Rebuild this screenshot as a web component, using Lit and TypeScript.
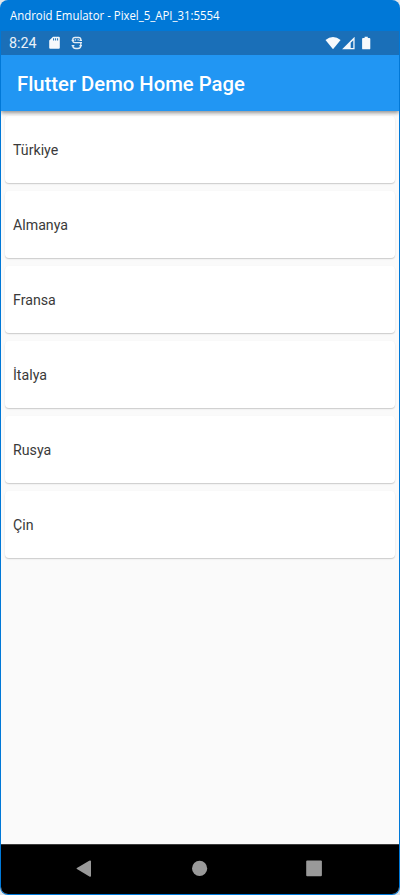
import { LitElement, html, css } from "lit";
import { customElement, property } from "lit/decorators.js";

@customElement("country-card")
class CountryCard extends LitElement {
  @property() name = "";
  static styles = css`
    :host {
      display: flex;
      align-items: center;
      box-sizing: border-box;
      height: 67px;
      padding: 0 8px;
      border-radius: 4px;
      background: #fff;
      box-shadow: 0 1px 1px rgba(0, 0, 0, 0.13), 0 1px 2px rgba(0, 0, 0, 0.08);
      color: #3a3a3a;
      font-size: 14.2px;
      line-height: 18px;
    }
  `;
  render() {
    return html`<span>${this.name}</span>`;
  }
}

@customElement("status-bar")
class StatusBar extends LitElement {
  static styles = css`
    :host {
      display: flex;
      align-items: center;
      position: relative;
      z-index: 2;
      height: 24px;
      flex: none;
      background: #1a6fb8;
      color: #e9f1f8;
      font-size: 14.3px;
    }
    .time {
      width: 41px;
      padding-left: 8px;
      box-sizing: border-box;
      margin-right: 7px;
      white-space: nowrap;
    }
    svg {
      display: block;
      fill: #f6f9fc;
    }
    .debug {
      margin-left: 10px;
    }
    .right {
      display: flex;
      align-items: center;
      margin-left: auto;
      margin-right: 28px;
    }
    .cell {
      margin-left: 1px;
    }
    .battery {
      margin-left: 7px;
    }
  `;
  render() {
    return html`
      <span class="time">8:24</span>
      <svg width="11" height="14" viewBox="0 0 11 14">
        <path fill-rule="evenodd" d="M4 .7h5.8q1 0 1 1v10.1q0 1-1 1H1.2q-1 0-1-1V4.5zM4.1 2.3v2.1h1V2.3zM6.1 2.3v2.1h1V2.3zM8.1 2.3v2.1h1V2.3z" />
      </svg>
      <svg class="debug" width="13" height="14" viewBox="0 0 13 14">
        <g fill="none" stroke="#e4edf5" stroke-width="1.3">
          <path d="M10.8 4.8V3.6Q10.8 1.5 8.6 1.5H5Q2.8 1.5 2.8 3.6V4.8Q2.8 6.6 4.8 6.6H10.8V9.4Q10.8 12.5 7.8 12.5H5.8Q2.8 12.5 2.8 9.8M1.6 4.3H4.2M9.4 4.3H12M10.4 6.6H12M1.6 9.6H4.4M9.4 9.6H12" />
          <path d="M4.8 3.9h1.3M7.5 3.9h1.3" stroke-width="1.1" />
        </g>
      </svg>
      <div class="right">
        <svg width="16" height="14" viewBox="0 0 16 14">
          <path d="M.5 3.9Q4 1 8 1t7.6 2.9L8 13.2z" />
        </svg>
        <svg class="cell" width="13" height="14" viewBox="0 0 13 14">
          <path fill-rule="evenodd" d="M12.6.7v12.5H.1zM11.3 4.2 8.7 6.8V12h2.6z" />
        </svg>
        <svg class="battery" width="9" height="14" viewBox="0 0 9 14">
          <path d="M2.6.7h3.2V2h1.6q.9 0 .9.9v9.5q0 .9-.9.9H1q-.9 0-.9-.9V2.9Q.1 2 1 2h1.6z" />
        </svg>
      </div>
    `;
  }
}

@customElement("navigation-bar")
class NavigationBar extends LitElement {
  static styles = css`
    :host {
      display: grid;
      grid-template-columns: 1fr 115px 1fr;
      align-items: center;
      justify-items: center;
      height: 50px;
      box-sizing: border-box;
      padding-bottom: 1px;
      flex: none;
      border-top: 1px solid #3c3c3c;
      background: #000;
    }
    svg {
      display: block;
      fill: #999;
    }
    .back {
      justify-self: end;
      margin-right: 51px;
    }
    .recent {
      justify-self: start;
      margin-left: 48px;
    }
  `;
  render() {
    return html`
      <svg class="back" width="16" height="18" viewBox="0 0 16 18">
        <path d="M.9 8.1 13.2.7Q15 .1 15 1.5v14.2q0 1.4-1.6.7L.9 9.1q-.8-.5 0-1z" />
      </svg>
      <svg width="16" height="18" viewBox="0 0 16 18">
        <circle cx="7.6" cy="8.4" r="7.6" />
      </svg>
      <svg class="recent" width="17" height="18" viewBox="0 0 17 18">
        <rect x=".2" y=".5" width="15.7" height="15.8" rx="1" />
      </svg>
    `;
  }
}

@customElement("app-root")
class AppRoot extends LitElement {
  private countries = ["Türkiye", "Almanya", "Fransa", "İtalya", "Rusya", "Çin"];

  static styles = css`
    :host {
      display: block;
      height: 895px;
      overflow: hidden;
      background: #e4e7ea;
      font-family: Roboto, "Liberation Sans", sans-serif;
    }
    .window {
      display: flex;
      flex-direction: column;
      height: 895px;
      box-sizing: border-box;
      padding: 0 1px 1px;
      border-radius: 8px;
      background: #0078d7;
    }
    .titlebar {
      flex: none;
      height: 31px;
      box-sizing: border-box;
      padding-left: 9px;
      line-height: 32px;
      color: #fff;
      font-family: "Open Sans", "Noto Sans", sans-serif;
      font-size: 12px;
      white-space: nowrap;
    }
    .title {
      display: inline-block;
      transform-origin: left center;
      transform: scaleX(0.95);
    }
    .screen {
      display: flex;
      flex-direction: column;
      flex: 1;
      min-height: 0;
      overflow: hidden;
      border-radius: 0 0 7px 7px;
      background: #fafafa;
    }
    .appbar {
      display: flex;
      align-items: center;
      flex: none;
      height: 56px;
      box-sizing: border-box;
      padding: 2px 16px 0;
      background: #2196f3;
      color: #fff;
      font-size: 20.25px;
      font-weight: 500;
      position: relative;
      z-index: 1;
      box-shadow: 0 2px 4px rgba(0, 0, 0, 0.3), 0 1px 4px rgba(0, 0, 0, 0.2);
    }
    .list {
      display: flex;
      flex-direction: column;
      flex: 1;
      gap: 8px;
      padding: 5px 4px 0;
    }
  `;

  render() {
    return html`
      <div class="window">
        <div class="titlebar"><span class="title">Android Emulator - Pixel_5_API_31:5554</span></div>
        <div class="screen">
          <status-bar></status-bar>
          <div class="appbar">Flutter Demo Home Page</div>
          <div class="list">
            ${this.countries.map((name) => html`<country-card .name=${name}></country-card>`)}
          </div>
          <navigation-bar></navigation-bar>
        </div>
      </div>
    `;
  }
}
